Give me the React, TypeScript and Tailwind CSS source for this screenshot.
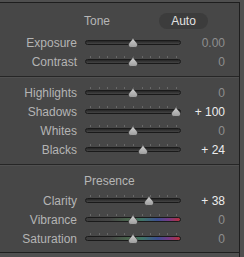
import React from "react";

type Row = {
  label: string;
  value: number;
  text: string;
  ticks?: boolean;
  color?: boolean;
};

const toneRows: Row[] = [
  { label: "Exposure", value: 0, text: "0.00", ticks: false },
  { label: "Contrast", value: 0, text: "0" },
];

const levelRows: Row[] = [
  { label: "Highlights", value: 0, text: "0" },
  { label: "Shadows", value: 100, text: "+ 100" },
  { label: "Whites", value: 0, text: "0" },
  { label: "Blacks", value: 24, text: "+ 24" },
];

const presenceRows: Row[] = [
  { label: "Clarity", value: 38, text: "+ 38" },
  { label: "Vibrance", value: 0, text: "0", color: true },
  { label: "Saturation", value: 0, text: "0", color: true },
];

const font = { fontFamily: '"Liberation Sans", Arial, sans-serif' };

function Thumb() {
  return (
    <svg width="10" height="11" viewBox="0 0 10 11">
      <defs>
        <linearGradient id="thumbFill" x1="0" y1="0" x2="0" y2="1">
          <stop offset="0" stopColor="#d4d4d4" />
          <stop offset="1" stopColor="#9c9c9c" />
        </linearGradient>
      </defs>
      <path
        d="M5 0.3 C5.6 2.2 6.3 3.3 8 5 C9.8 6.8 9.9 8.8 8.9 9.9 C8 10.8 2 10.8 1.1 9.9 C0.1 8.8 0.2 6.8 2 5 C3.7 3.3 4.4 2.2 5 0.3 Z"
        fill="url(#thumbFill)"
        stroke="#2b2b2b"
        strokeWidth="0.6"
      />
    </svg>
  );
}

function Slider({ row }: { row: Row }) {
  // thumb travels from 5px to 91px inside the 96px track
  const left = 5 + ((row.value + 100) / 200) * 86;
  const ticks = Array.from({ length: 11 }, (_, i) => 5 + i * 8.6);
  return (
    <div className="relative w-[96px] h-[19px]">
      {row.ticks !== false &&
        ticks.map((t) => (
          <div
            key={t}
            className="absolute top-[4px] w-px h-[2px] bg-[#686868]"
            style={{ left: Math.round(t) }}
          />
        ))}
      <div
        className={
          row.color
            ? "absolute left-0 right-0 top-[7px] h-[5px] rounded-full border border-[#1a1a1a] bg-[linear-gradient(to_right,#3c3c3c_0%,#444_25%,#4a6a4e_48%,#3f7468_60%,#3c4f90_76%,#763a86_88%,#b8303a_100%)]"
            : "absolute left-0 right-0 top-[7px] h-[5px] rounded-full border border-[#1a1a1a] bg-[linear-gradient(to_bottom,#262626,#454545)]"
        }
      />
      <div className="absolute top-[4px] -ml-[5px]" style={{ left }}>
        <Thumb />
      </div>
    </div>
  );
}

function SliderRow({ row }: { row: Row }) {
  return (
    <div className="flex items-center h-[19px]">
      <div className="w-[77px] text-right text-[12px] text-[#b4b4b4] leading-none">{row.label}</div>
      <div className="ml-[8px]">
        <Slider row={row} />
      </div>
      <div
        className={
          row.value !== 0
            ? "w-[44px] text-right text-[12px] leading-none text-[#ececec]"
            : "w-[44px] text-right text-[12px] leading-none text-[#8e8e8e]"
        }
      >
        {row.text}
      </div>
    </div>
  );
}

function Divider() {
  return (
    <div>
      <div className="h-px bg-[#262626]" />
      <div className="h-px bg-[#505050]" />
    </div>
  );
}

export default function App() {
  return (
    <div className="w-[244px] h-[257px] bg-[#4f4f4f] flex flex-col overflow-hidden" style={font}>
      <div className="h-[2px] shrink-0" />
      <div className="flex flex-1 min-h-0">
        <div className="w-[239px] flex flex-col bg-[#474747] border-t border-[#1e1e1e]">
          <div className="pt-[10px] pb-[5px]">
            <div className="flex items-center h-[16px]">
              <div className="ml-[84px] text-[12px] text-[#b6b6b6] leading-none">Tone</div>
              <div className="ml-[49px] w-[49px] h-[16px] rounded-full bg-[#3c3c3c] flex items-center justify-center text-[12px] text-[#e2e2e2] leading-none">
                Auto
              </div>
            </div>
            <div className="mt-[4px]">
              {toneRows.map((r) => (
                <SliderRow key={r.label} row={r} />
              ))}
            </div>
          </div>
          <Divider />
          <div className="pt-[5px] pb-[5px]">
            {levelRows.map((r) => (
              <SliderRow key={r.label} row={r} />
            ))}
          </div>
          <Divider />
          <div className="pt-[7px]">
            <div className="flex items-center h-[16px]">
              <div className="ml-[84px] text-[12px] text-[#b6b6b6] leading-none">Presence</div>
            </div>
            <div className="mt-[2px]">
              {presenceRows.map((r) => (
                <SliderRow key={r.label} row={r} />
              ))}
            </div>
          </div>
          <div className="flex-1" />
          <div className="h-px bg-[#1e1e1e]" />
          <div className="h-[4px] bg-[#4f4f4f]" />
        </div>
        <div className="w-px bg-[#1e1e1e]" />
        <div className="flex-1" />
      </div>
    </div>
  );
}
